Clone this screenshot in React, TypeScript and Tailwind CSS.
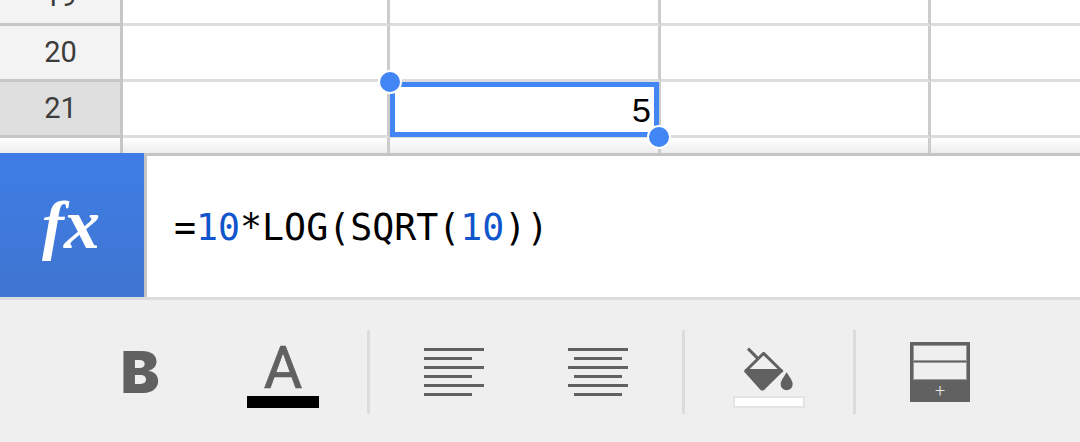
import React from 'react';

const rows = [
    { id: '19', selected: false, last: false, value: '' },
    { id: '20', selected: false, last: false, value: '' },
    { id: '21', selected: true, last: false, value: '5' },
    { id: '', selected: false, last: true, value: '' },
];

const Separator = () => <div className="mt-[30px] h-[84px] w-[3px] bg-[#dcdcdc]" />;

const AlignLines = ({ center }: { center?: boolean }) => (
    <div className={`mt-[48px] flex w-[60px] flex-col gap-[6px] ${center ? 'items-center' : 'items-start'}`}>
        {[60, 48, 60, 48, 60, 48].map((width, i) => (
            <div
                key={i}
                className={`h-[3px] bg-[#616161] ${width === 60 ? 'w-[60px]' : 'w-[48px]'}`}
            />
        ))}
    </div>
);

const BucketIcon = () => (
    <svg width="52" height="45" viewBox="70 80 156 135" className="mt-[47px]">
        <path d="M85 85 L135 135" stroke="#616161" strokeWidth="9" fill="none" />
        <path
            d="M132 99 L186 152 L78 152 Z"
            fill="#efefef"
            stroke="#616161"
            strokeWidth="9"
            strokeLinejoin="round"
        />
        <path
            d="M78 146 L186 146 L191 152 L134 208 Q128 213 122 208 L75 156 Z"
            fill="#616161"
        />
        <path
            d="M201 156 C190 174 183 182 183 192 A18 18 0 0 0 219 192 C219 182 212 174 201 156 Z"
            fill="#616161"
        />
    </svg>
);

export default function App() {
    return (
        <div className="flex h-[442px] w-[1080px] flex-col overflow-hidden bg-white font-['Roboto',sans-serif]">
            <div className="relative h-[153px] overflow-hidden">
                <div className="mt-[-30px] flex flex-col">
                    {rows.map((row, i) => (
                        <div
                            key={i}
                            className={`flex h-[56px] ${row.last ? 'bg-[linear-gradient(to_bottom,#ffffff_0px,#ededed_15px)]' : ''}`}
                        >
                            <div
                                className={`flex w-[123px] items-center justify-center border-r-[3px] border-b-[3px] border-[#c6c6c6] pl-[1px] text-[29px] text-[#3c3c3c] ${row.selected ? 'bg-[#dedede]' : row.last ? '' : 'bg-[#f3f3f3]'}`}
                            >
                                {row.id}
                            </div>
                            <div className="w-[267px] border-r-[3px] border-b-[3px] border-r-[#cccccc] border-b-[#dddddd]" />
                            <div className="flex w-[271px] items-center justify-end border-r-[3px] border-b-[3px] border-r-[#cccccc] border-b-[#dddddd] pr-[7px] pt-[3px] font-['Liberation_Sans',sans-serif] text-[34px] text-black">
                                {row.value}
                            </div>
                            <div className="w-[270px] border-r-[3px] border-b-[3px] border-r-[#cccccc] border-b-[#dddddd]" />
                            <div className="flex-1 border-b-[3px] border-b-[#dddddd]" />
                        </div>
                    ))}
                </div>
                <div className="absolute left-[390px] top-[82px] h-[55px] w-[269px] border-[5px] border-[#4285f4]" />
                <div className="absolute left-[378px] top-[70px] h-[24px] w-[24px] rounded-full border-2 border-white bg-[#4285f4]" />
                <div className="absolute left-[647px] top-[125px] h-[24px] w-[24px] rounded-full border-2 border-white bg-[#4285f4]" />
            </div>

            <div className="flex h-[147px] border-b-[3px] border-[#dcdcdc]">
                <div className="flex h-[144px] w-[144px] items-center justify-center bg-gradient-to-b from-[#3e7de6] to-[#3f75d0] pb-[2px] pr-[2px] font-['Liberation_Serif',serif] text-[66px] font-bold italic text-white">
                    f<span className="text-[72px]">x</span>
                </div>
                <div className="flex h-[144px] flex-1 items-center border-t-[3px] border-l-[3px] border-[#c4c4c4] bg-white pl-[27px] pt-[3px] font-['DejaVu_Sans_Mono',monospace] text-[36.6px] text-black">
                    =<span className="text-[#1155cc]">10</span>*LOG(SQRT(<span className="text-[#1155cc]">10</span>))
                </div>
            </div>

            <div className="flex h-[142px] bg-[#efefef] pl-[68px] text-[#616161]">
                <div className="flex w-[144px] justify-center pt-[32px] font-['Inter',sans-serif] text-[58px] leading-[80px] font-black">
                    B
                </div>
                <div className="relative flex w-[142px] justify-center pt-[28px] text-[59px] leading-[80px] [-webkit-text-stroke:0.7px_#616161]">
                    A
                    <div className="absolute left-[35px] top-[96px] h-[12px] w-[72px] bg-black" />
                </div>
                <div className="ml-[13px]">
                    <Separator />
                </div>
                <div className="flex w-[168px] justify-center">
                    <AlignLines />
                </div>
                <div className="flex w-[120px] justify-center">
                    <AlignLines center />
                </div>
                <div className="ml-[24px]">
                    <Separator />
                </div>
                <div className="flex w-[168px] flex-col items-center">
                    <BucketIcon />
                    <div className="mt-[4px] h-[12px] w-[72px] border-2 border-[#e4e4e4] bg-white" />
                </div>
                <Separator />
                <div className="flex w-[168px] justify-center">
                    <div className="mt-[42px] flex h-[60px] w-[60px] flex-col bg-[#616161] px-[3px] pt-[3px]">
                        <div className="h-[16px] border border-[#9a9a9a] bg-[#efefef]" />
                        <div className="mt-[1px] h-[18px] border border-[#9a9a9a] bg-[#efefef]" />
                        <div className="flex flex-1 items-center justify-center text-[18px] leading-none font-light text-[#e4e4e4]">
                            +
                        </div>
                    </div>
                </div>
            </div>
        </div>
    );
}
